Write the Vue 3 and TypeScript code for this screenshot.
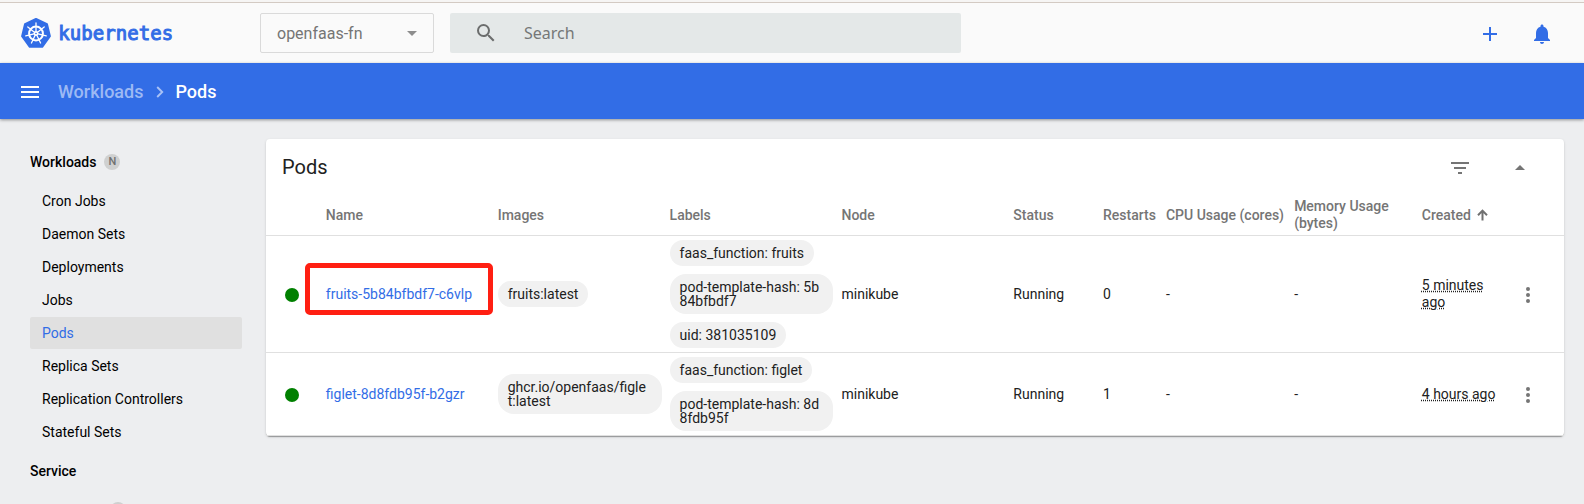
<script setup lang="ts">
interface Pod {
  name: string
  highlighted: boolean
  image: string
  labels: string[]
  node: string
  status: string
  restarts: number
  created: string
}

const workloads: string[] = [
  'Cron Jobs',
  'Daemon Sets',
  'Deployments',
  'Jobs',
  'Pods',
  'Replica Sets',
  'Replication Controllers',
  'Stateful Sets',
]
const current = 'Pods'

const columns: string[] = [
  'Name', 'Images', 'Labels', 'Node', 'Status', 'Restarts', 'CPU Usage (cores)', 'Memory Usage (bytes)',
]

const pods: Pod[] = [
  {
    name: 'fruits-5b84bfbdf7-c6vlp',
    highlighted: true,
    image: 'fruits:latest',
    labels: ['faas_function: fruits', 'pod-template-hash: 5b84bfbdf7', 'uid: 381035109'],
    node: 'minikube',
    status: 'Running',
    restarts: 0,
    created: '5 minutes ago',
  },
  {
    name: 'figlet-8d8fdb95f-b2gzr',
    highlighted: false,
    image: 'ghcr.io/openfaas/figlet:latest',
    labels: ['faas_function: figlet', 'pod-template-hash: 8d8fdb95f'],
    node: 'minikube',
    status: 'Running',
    restarts: 1,
    created: '4 hours ago',
  },
]

// The seven spokes of the helm wheel, in degrees
const spokes: number[] = Array.from({ length: 7 }, (_, i) => (i * 360) / 7)
</script>

<template>
  <div class="page">
    <div class="edge"></div>
    <header class="topbar">
      <div class="brand">
        <svg class="helm" width="30" height="30" viewBox="0 0 30 30">
          <path
            d="M15 1 26 6.2 28.900 18.200 21.200 28.800H8.800L1.100 18.200 4 6.200Z"
            fill="#326de6" stroke="#326de6" stroke-width="2" stroke-linejoin="round"
          />
          <circle cx="15" cy="15.500" r="6.900" fill="none" stroke="#fff" stroke-width="2" />
          <g stroke="#fff" stroke-width="1.300" stroke-linecap="round">
            <line
              v-for="a in spokes" :key="a" x1="15" y1="13.500" x2="15" y2="5"
              :transform="`rotate(${a} 15 15.5)`"
            />
          </g>
          <circle cx="15" cy="15.500" r="2.400" fill="#fff" />
          <circle cx="15" cy="15.500" r=".8" fill="#326de6" />
        </svg>
        <svg class="wordmark" width="116" height="30" viewBox="0 0 116 30">
          <text x="0" y="0" transform="translate(-.8 22.300)" textLength="115">kubernetes</text>
        </svg>
      </div>
      <div class="namespace">
        <span>openfaas-fn</span>
        <svg width="10" height="5" viewBox="0 0 10 5"><path d="M0 0h10L5 5z" fill="#8d8d8d" /></svg>
      </div>
      <div class="search">
        <svg width="24" height="24" viewBox="0 0 24 24">
          <path d="M15.5 14h-.79l-.28-.27A6.47 6.47 0 0 0 16 9.5 6.5 6.5 0 1 0 9.5 16c1.61 0 3.09-.59 4.23-1.57l.27.28v.79l5 4.99L20.49 19l-4.99-5zm-6 0C7.01 14 5 11.99 5 9.5S7.01 5 9.5 5 14 7.01 14 9.5 11.99 14 9.5 14z" fill="#6b6d6d" />
        </svg>
        <span>Search</span>
      </div>
      <div class="actions">
        <svg width="24" height="24" viewBox="0 0 24 24"><path d="M19 13h-6v6h-2v-6H5v-2h6V5h2v6h6v2z" fill="#326de6" /></svg>
        <svg width="24" height="24" viewBox="0 0 24 24">
          <path d="M12 22c1.100 0 2-.9 2-2h-4c0 1.100.9 2 2 2zm6-6v-5c0-3.070-1.630-5.640-4.500-6.320V4c0-.83-.67-1.500-1.500-1.500s-1.500.67-1.500 1.500v.68C7.640 5.360 6 7.920 6 11v5l-2 2v1h16v-1l-2-2z" fill="#326de6" />
        </svg>
      </div>
    </header>

    <nav class="crumbs">
      <svg class="menu" width="18" height="12" viewBox="0 0 18 12"><path d="M0 0h18v2H0zM0 5h18v2H0zM0 10h18v2H0z" fill="#fff" /></svg>
      <span class="parent">Workloads</span>
      <svg class="chevron" width="8" height="12" viewBox="0 0 8 12"><path d="M1.200 1 6.200 6l-5 5" fill="none" stroke="#a9c2f6" stroke-width="1.900" /></svg>
      <span class="here">Pods</span>
    </nav>

    <div class="body">
      <aside class="side">
        <div class="group">Workloads <span class="badge">N</span></div>
        <a v-for="w in workloads" :key="w" class="item" :class="{ active: w === current }">{{ w }}</a>
        <div class="group service">Service</div>
        <div class="next"><span class="badge"></span></div>
      </aside>

      <main class="card">
        <div class="card-head">
          <h1>Pods</h1>
          <svg class="filter" width="18" height="12" viewBox="0 0 18 12"><path d="M7 12h4v-2H7v2zM0 0v2h18V0H0zm3 7h12V5H3v2z" fill="#757575" /></svg>
          <svg width="10" height="5" viewBox="0 0 10 5"><path d="M0 5h10L5 0z" fill="#757575" /></svg>
        </div>
        <div class="row head">
          <span></span>
          <span v-for="c in columns" :key="c">{{ c }}</span>
          <span class="sorted">Created
            <svg width="11" height="12" viewBox="0 0 11 12"><path d="M5.500 11.500V1.500M1 6.200 5.500 1.600 10 6.200" fill="none" stroke="#707070" stroke-width="2" /></svg>
          </span>
          <span></span>
        </div>
        <div v-for="p in pods" :key="p.name" class="row">
          <i class="dot"></i>
          <span class="name"><a>{{ p.name }}</a><i v-if="p.highlighted" class="marker"></i></span>
          <div class="chips"><span class="chip">{{ p.image }}</span></div>
          <div class="chips"><span v-for="l in p.labels" :key="l" class="chip">{{ l }}</span></div>
          <span>{{ p.node }}</span>
          <span>{{ p.status }}</span>
          <span>{{ p.restarts }}</span>
          <span>-</span>
          <span>-</span>
          <span class="age"><u>{{ p.created }}</u></span>
          <svg class="more" width="6" height="16" viewBox="0 0 6 16">
            <g fill="#757575"><circle cx="3" cy="2" r="2" /><circle cx="3" cy="8" r="2" /><circle cx="3" cy="14" r="2" /></g>
          </svg>
        </div>
      </main>
    </div>
  </div>
</template>

<style>
body { background: #edeef0; }
</style>

<style scoped>
.page {
  width: 1584px;
  height: 504px;
  overflow: hidden;
  background: #edeef0;
  font-family: Roboto, sans-serif;
  font-size: 14px;
  color: #212121;
}
.page, .page * { box-sizing: border-box; }
svg { display: block; flex: none; }
.edge { height: 3px; background: #f6f5f4; border-bottom: 1px solid #d3cac3; }
.topbar {
  height: 60px;
  display: flex;
  align-items: flex-start;
  background: #fafafa;
  padding: 10px 30px 0 21px;
}
.brand { width: 239px; display: flex; padding-top: 5px; }
.wordmark { margin-left: 8px; overflow: visible; }
.wordmark text {
  font: 19px "DejaVu Sans Mono", monospace;
  fill: #326de6;
  stroke: #326de6;
  stroke-width: 1px;
}
.namespace {
  width: 174px;
  height: 40px;
  border: 1px solid #dadada;
  border-radius: 2px;
  display: flex;
  align-items: center;
  justify-content: space-between;
  padding: 0 16px;
  font-size: 16px;
  color: #757575;
}
.search {
  width: 511px;
  height: 40px;
  margin-left: 16px;
  background: #e4e8e8;
  border-radius: 2px;
  display: flex;
  align-items: center;
  padding-left: 24px;
  font: 16px "Noto Sans", sans-serif;
  color: #757777;
}
.search span { margin-left: 26px; }
.actions { margin-left: auto; padding-top: 9px; display: flex; gap: 28px; }
.crumbs {
  position: relative;
  height: 56px;
  background: #326de6;
  box-shadow: 0 1px 3px rgba(0, 0, 0, .4);
  display: flex;
  align-items: center;
  padding: 0 21px;
  font-size: 18px;
  font-weight: 500;
}
.menu { margin-top: 2px; }
.parent { margin-left: 19px; color: #9db9f4; }
.chevron { margin: 2px 11px 0 13px; }
.here { color: #fff; }
.body { display: flex; align-items: flex-start; height: 385px; }
.side { width: 266px; padding: 27px 24px 0 30px; color: #000; }
.group { height: 32px; display: flex; align-items: center; font-weight: 500; margin-bottom: 7px; }
.group.service { margin: 7px 0 0; }
.badge {
  width: 16px;
  height: 16px;
  border-radius: 50%;
  margin-left: 8px;
  background: #cfd0d0;
  color: #6f7070;
  font-size: 11px;
  font-weight: 500;
  line-height: 16px;
  text-align: center;
}
.item {
  height: 32px;
  margin-bottom: 1px;
  padding-left: 12px;
  display: flex;
  align-items: center;
  border-radius: 2px;
}
.active { background: #e0e0e0; color: #326de6; }
.next { display: flex; padding: 15px 0 0 72px; }
.card {
  width: 1298px;
  height: 297px;
  margin-top: 20px;
  background: #fff;
  border-radius: 4px;
  box-shadow: 0 2px 1px -1px rgba(0, 0, 0, .2), 0 1px 1px rgba(0, 0, 0, .14), 0 1px 3px rgba(0, 0, 0, .12);
}
.card-head { height: 56px; display: flex; align-items: center; padding: 0 39px 0 16px; }
h1 { margin: 0; font-size: 20px; font-weight: 400; flex: 1; }
.filter { margin: 2px 46px 0 0; }
.row {
  display: grid;
  grid-template-columns: 59.800px 171.900px 171.900px 171.900px 171.900px 89.700px 62.900px 128.200px 127.700px 101px 41px;
  align-items: center;
  border-bottom: 1px solid #e0e0e0;
  line-height: 17px;
}
.head {
  height: 41px;
  font-weight: 500;
  color: #757575;
}
.sorted { display: flex; align-items: center; gap: 6px; }
.sorted svg { margin-top: -1px; }
.dot { width: 14px; height: 14px; margin: 2px 0 0 19px; border-radius: 50%; background: #008000; }
.name { position: relative; color: #326de6; }
.marker {
  position: absolute;
  left: -21px;
  top: -23px;
  width: 188px;
  height: 52px;
  border: 5px solid #ff1f12;
  border-radius: 5px;
}
.chips { display: flex; flex-direction: column; align-items: flex-start; gap: 8px; padding: 4px 8px 4px 0; }
.chip {
  padding: 6px 10px;
  border-radius: 16px;
  background: #f1f1f1;
  line-height: 14px;
  word-break: break-all;
}
.age { padding-right: 21px; }
.age u { text-decoration: underline dotted; }
.more { margin: 2px 0 0 2px; }
</style>
